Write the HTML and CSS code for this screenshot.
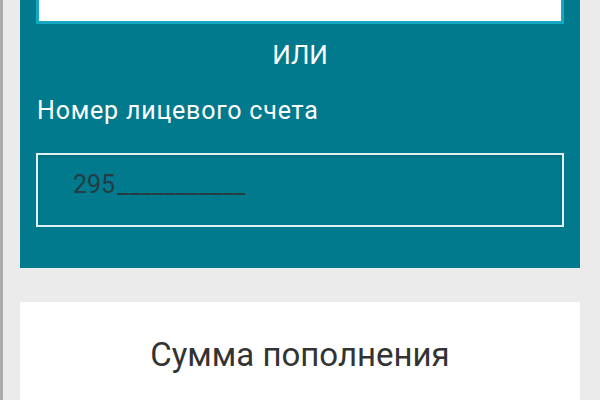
FILE: index.html
```html
<!DOCTYPE html>
<html lang="ru">
<head>
<meta charset="utf-8">
<title>Пополнение счета</title>
<link rel="stylesheet" href="styles.css">
</head>
<body>
<div class="page">
  <section class="panel">
    <div class="field-top"></div>
    <div class="or">ИЛИ</div>
    <div class="label">Номер лицевого счета</div>
    <div class="field-account"><span class="mask">295<span class="mask-rest">___________</span></span></div>
  </section>
  <section class="card">
    <h2 class="card-title">Сумма пополнения</h2>
  </section>
</div>
</body>
</html>
```

FILE: styles.css
```css
html, body {
  margin: 0;
  padding: 0;
  height: 100%;
  overflow: hidden;
}
body {
  background: #ebebeb;
  font-family: Roboto, "Noto Sans", sans-serif;
}
.page {
  min-height: 100%;
  padding: 0 20px;
  box-shadow: inset 3px 0 0 #ababab;
}
.panel {
  background: #027a8e;
  margin-top: -40px;
  padding: 16px 16px 41px;
}
.field-top {
  height: 42px;
  background: #ffffff;
  border: 3px solid #16a7c3;
}
.or {
  margin-top: 16px;
  text-align: center;
  color: #ffffff;
  font-size: 26px;
  line-height: 30px;
}
.label {
  margin-top: 26px;
  color: #ffffff;
  font-size: 25px;
  line-height: 30px;
  letter-spacing: 0.8px;
  padding-left: 1px;
}
.field-account {
  margin-top: 27px;
  height: 70px;
  box-sizing: content-box;
  border: 2px solid #e2f0f2;
  box-shadow: inset 0 2px 3px rgba(0, 0, 0, 0.12);
  padding: 0 0 0 35px;
  display: flex;
  align-items: flex-start;
}
.mask {
  margin-top: 15px;
  font-size: 25px;
  line-height: 30px;
  color: #243c42;
}
.mask-rest {
  letter-spacing: 0.4px;
  margin-left: 2px;
}
.card {
  margin-top: 34px;
  background: #ffffff;
  padding: 33px 16px 40px;
}
.card-title {
  margin: 0;
  text-align: center;
  font-weight: normal;
  font-size: 33px;
  line-height: 40px;
  color: #333333;
}
```
